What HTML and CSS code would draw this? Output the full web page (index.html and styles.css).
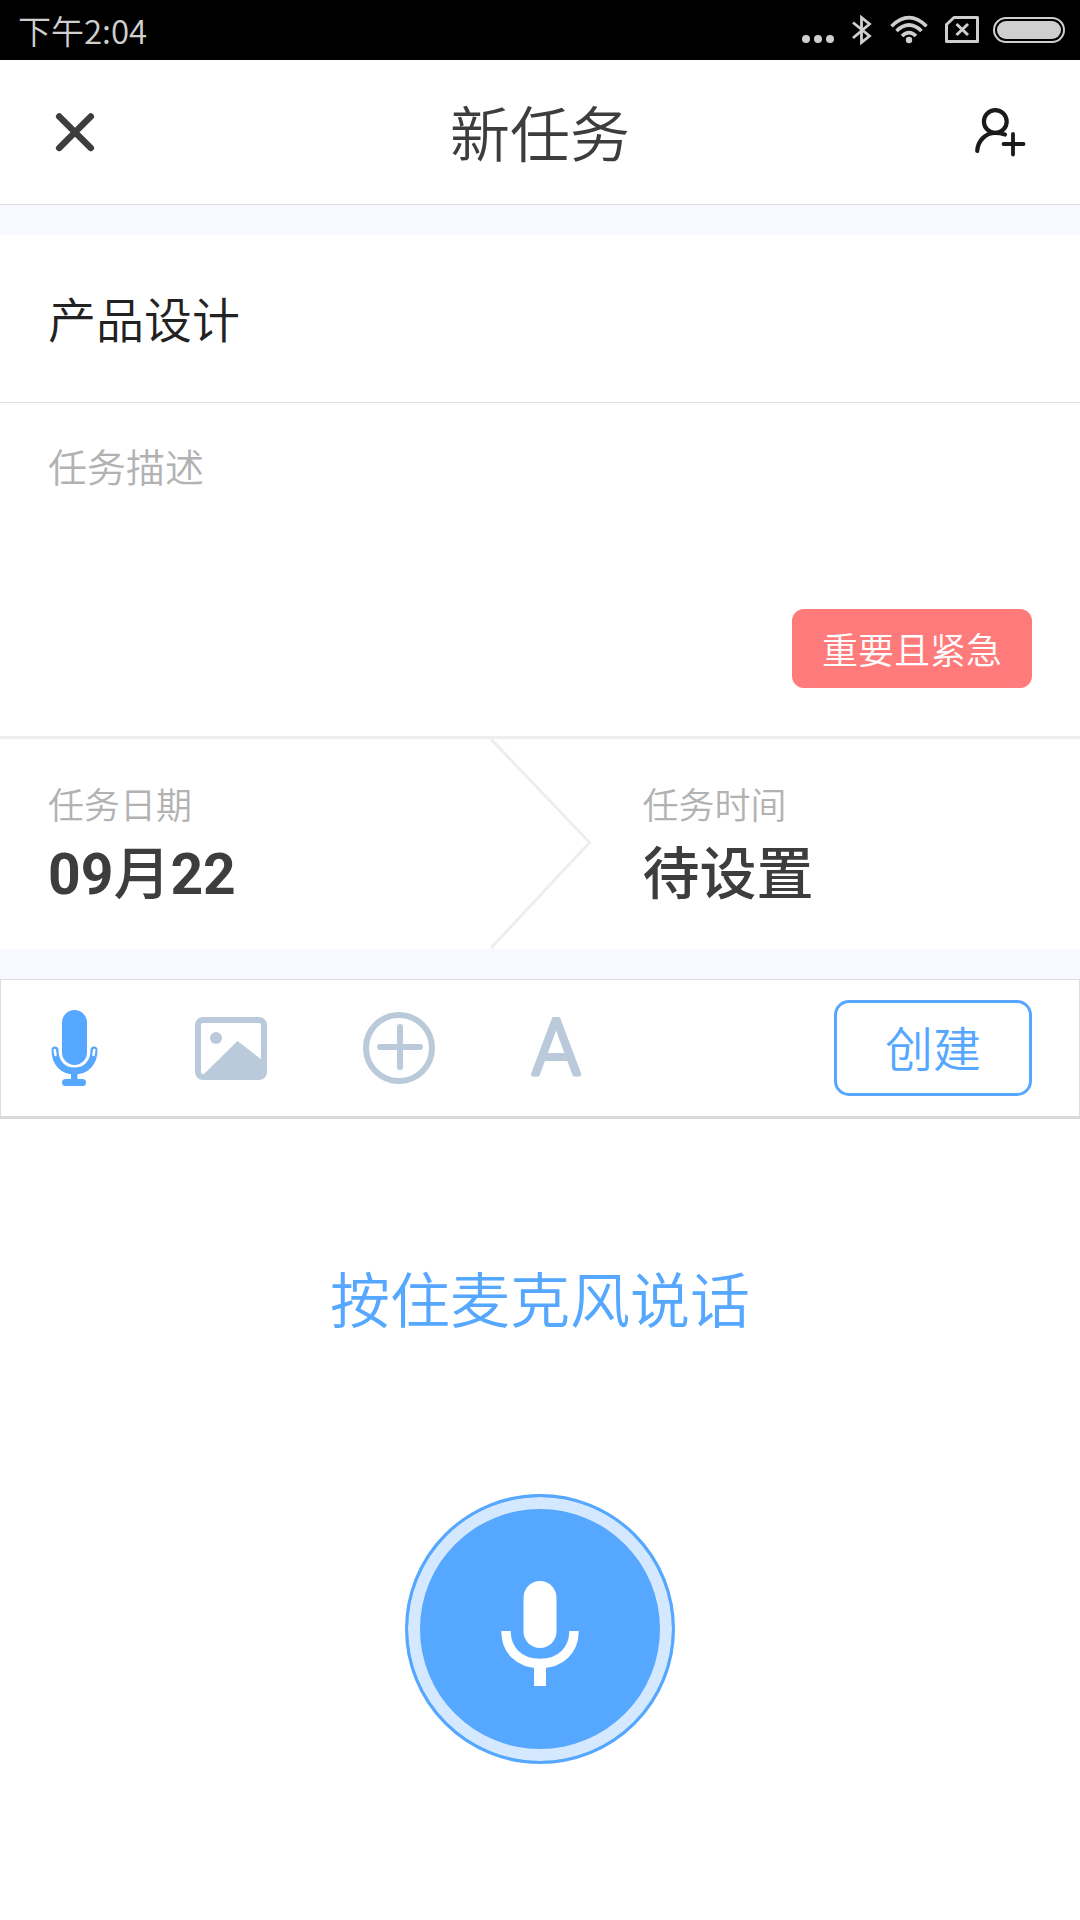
FILE: index.html
```
<!DOCTYPE html>
<html lang="zh-CN">
<head>
    <meta charset="UTF-8">
    <meta name="viewport" content="width=device-width, initial-scale=1.0">
    <title>新任务</title>
    <link rel="stylesheet" href="styles.css">
</head>
<body>
    <div class="status-bar">
        <span class="clock">下午2:04</span>
        <div class="status-icons">
            <svg width="34" height="30" viewBox="0 0 34 30" fill="#cfcfcf">
                <circle cx="4" cy="24" r="4"/>
                <circle cx="16" cy="24" r="4"/>
                <circle cx="28" cy="24" r="4"/>
            </svg>
            <svg class="bluetooth" width="20" height="30" viewBox="0 0 20 30" fill="none" stroke="#cfcfcf" stroke-width="2.800">
                <path d="M1 7.500L17.500 21L9.500 27.500V2.500L17.500 9L1 23"/>
            </svg>
            <svg class="wifi" width="38" height="30" viewBox="0 0 38 30" fill="none" stroke="#cfcfcf" stroke-width="3.600">
                <path d="M1.500 11.200Q19-5.800 36.500 11.200M6.500 16Q19 4 31.500 16M12 21Q19 14.200 26 21"/>
                <circle cx="19" cy="25" r="3.200" fill="#cfcfcf" stroke="none"/>
            </svg>
            <svg class="sim" width="34" height="30" viewBox="0 0 34 30" fill="none" stroke="#cfcfcf" stroke-width="3">
                <path d="M9 2.500H32.500V26.500H1.500V9.500Z" stroke-linejoin="round"/>
                <path d="M11.500 9L23 20M23 9L11.500 20"/>
            </svg>
            <svg class="battery" width="72" height="26" viewBox="0 0 72 26">
                <rect x="1" y="1" width="70" height="24" rx="12" fill="none" stroke="#cfcfcf" stroke-width="2"/>
                <rect x="4" y="4" width="64" height="18" rx="9" fill="#cfcfcf"/>
            </svg>
        </div>
    </div>

    <header class="header">
        <button class="icon-btn" type="button" aria-label="关闭">
            <svg width="58" height="52" viewBox="0 0 58 52" stroke="#3d3d3d" stroke-width="6.500" stroke-linecap="round">
                <path d="M11.200 10.500L42.800 42M42.800 10.500L11.200 42"/>
            </svg>
        </button>
        <h1>新任务</h1>
        <button class="icon-btn" type="button" aria-label="添加成员">
            <svg width="58" height="52" viewBox="0 0 58 52" fill="none" stroke="#1a1a1a" stroke-width="4.200" stroke-linecap="round">
                <circle cx="21.300" cy="15.500" r="11.400"/>
                <path d="M3.200 45C4 34 12 27 21 27Q26 27 31 28.500"/>
                <path d="M39 28V48.500M29.500 38H49.500" stroke-width="3.800"/>
            </svg>
        </button>
    </header>

    <main>
        <form class="task-form">
            <input class="task-title" type="text" aria-label="任务名称" value="产品设计">
            <div class="desc">
                <textarea class="task-desc" rows="3" aria-label="任务描述" placeholder="任务描述"></textarea>
                <button class="tag" type="button">重要且紧急</button>
            </div>
            <div class="schedule">
                <button class="schedule-item" type="button">
                    <span class="label">任务日期</span>
                    <span class="value"><b>09</b>月<b>22</b></span>
                </button>
                <svg class="chevron" width="102" height="210" viewBox="0 0 102 210" fill="none" stroke="#eee" stroke-width="3">
                    <path d="M1 0L99.500 103.500L1 209"/>
                </svg>
                <button class="schedule-item next" type="button">
                    <span class="label">任务时间</span>
                    <span class="value">待设置</span>
                </button>
            </div>
            <div class="toolbar">
                <button class="icon-btn" type="button" aria-label="语音">
                    <svg width="48" height="78" viewBox="0 0 48 78" fill="#56a7ff">
                        <rect x="11" y="1" width="25" height="55" rx="12.500"/>
                        <path d="M4 41C4 54 12 62 23.500 62C35 62 43 54 43 41" fill="none" stroke="#56a7ff" stroke-width="7" stroke-linecap="round"/>
                        <path d="M3.700 41L4.500 46M43.300 41L42.500 46" stroke="#fff" stroke-width="2.500" stroke-linecap="round"/>
                        <rect x="20" y="62" width="6.500" height="10"/>
                        <rect x="11" y="70" width="24" height="7" rx="3.500"/>
                    </svg>
                </button>
                <button class="icon-btn" type="button" aria-label="图片">
                    <svg width="72" height="63" viewBox="0 0 72 63">
                        <rect x="3" y="3" width="66" height="57" rx="5" fill="none" stroke="#bacada" stroke-width="6"/>
                        <circle cx="21" cy="21" r="6" fill="#bacada"/>
                        <path d="M8 58L42.500 24L67 43V60H8Z" fill="#bacada"/>
                    </svg>
                </button>
                <button class="icon-btn" type="button" aria-label="添加">
                    <svg width="72" height="72" viewBox="0 0 72 72" fill="none" stroke="#bacada" stroke-width="6" stroke-linecap="round">
                        <circle cx="36" cy="36" r="33"/>
                        <path d="M37 15V55M17 35H57"/>
                    </svg>
                </button>
                <button class="icon-btn" type="button" aria-label="文字">
                    <svg class="letter" width="52" height="96" viewBox="0 0 52 96">
                        <text x="25" y="75" text-anchor="middle">A</text>
                    </svg>
                </button>
                <button class="create-btn" type="submit">创建</button>
            </div>
        </form>

        <section class="voice">
            <p>按住麦克风说话</p>
            <button class="mic-btn" type="button" aria-label="麦克风">
                <svg width="80" height="106" viewBox="0 0 80 106" fill="#fff">
                    <rect x="23.500" y="0" width="33" height="67" rx="16.500"/>
                    <path d="M6 50C6 69 19 82.500 40 82.500C61 82.500 74 69 74 50" fill="none" stroke="#fff" stroke-width="9.500"/>
                    <rect x="34" y="82" width="12" height="23"/>
                </svg>
            </button>
        </section>
    </main>
</body>
</html>
```

FILE: styles.css
```
* {
    box-sizing: border-box;
}
body {
    margin: 0;
    background-color: #fff;
    color: #3d3d3d;
    font-family: "Noto Sans CJK SC", sans-serif;
    font-weight: 350;
}
button, input, textarea {
    font: inherit;
    color: inherit;
    margin: 0;
    padding: 0;
    border: none;
    background: none;
    outline: none;
}
button {
    cursor: pointer;
}
svg {
    display: block;
    flex: none;
}
.status-bar {
    display: flex;
    justify-content: space-between;
    align-items: center;
    height: 60px;
    padding: 0 15px 0 18px;
    background-color: #000;
    color: #cfcfcf;
}
.clock {
    font-size: 33px;
    line-height: 60px;
}
.status-icons {
    display: flex;
    align-items: center;
}
.bluetooth {
    margin-left: 16px;
}
.wifi {
    margin-left: 18px;
}
.sim {
    margin-left: 17px;
}
.battery {
    margin-left: 14px;
}
.header {
    display: flex;
    justify-content: space-between;
    align-items: center;
    height: 145px;
    padding: 0 48px;
    border-bottom: 1px solid #ddd;
}
.header h1 {
    margin: 0;
    padding-bottom: 2px;
    font-size: 60px;
    font-weight: inherit;
    line-height: 84px;
}
.task-form {
    border-top: 30px solid #f6faff;
}
.task-title {
    display: block;
    width: 100%;
    height: 168px;
    padding: 46px 48px 49px;
    border-bottom: 1px solid #ddd;
    color: #222;
    font-size: 48px;
    line-height: 72px;
}
.desc {
    display: flex;
    flex-direction: column;
    padding: 34px 48px 48px;
    border-bottom: 3px solid #eee;
}
.task-desc {
    width: 100%;
    margin-bottom: 4px;
    font-size: 39px;
    line-height: 56px;
    resize: none;
}
.task-desc::placeholder {
    color: #b2b2b2;
}
.tag {
    align-self: flex-end;
    padding: 12px 30px;
    border-radius: 12px;
    background-color: #ff7b7b;
    color: #fff;
    font-size: 36px;
    line-height: 55px;
}
.schedule {
    display: flex;
    border-bottom: 30px solid #f6faff;
}
.schedule-item {
    display: flex;
    flex: 1;
    flex-direction: column;
    justify-content: center;
    gap: 6px;
    padding: 3px 0 0 48px;
    text-align: left;
}
.schedule-item.next {
    padding-left: 51px;
}
.chevron {
    margin-left: 4px;
}
.label {
    color: #b2b2b2;
    font-size: 36px;
    line-height: 52px;
}
.value {
    font-family: Roboto, "Noto Sans CJK SC", sans-serif;
    font-size: 57px;
    font-weight: 500;
    line-height: 80px;
}
.value b {
    font-weight: bold;
}
.toolbar {
    display: flex;
    align-items: center;
    gap: 96px;
    padding: 20px 47px 20px 50px;
    border: 1px solid #ddd;
    border-bottom: 3px solid #d9d9d9;
}
.letter text {
    fill: #bacada;
    stroke: #bacada;
    stroke-width: 4;
    stroke-linejoin: round;
    font-family: Roboto, sans-serif;
    font-size: 78px;
    font-weight: 300;
}
.create-btn {
    padding: 7px 48px 11px;
    margin-left: auto;
    border: 3px solid #56a7ff;
    border-radius: 15px;
    color: #56a7ff;
    font-size: 48px;
    line-height: 72px;
}
.voice {
    display: flex;
    flex-direction: column;
    align-items: center;
    gap: 153px;
    padding: 134px 48px;
}
.voice p {
    margin: 0;
    color: #56a7ff;
    font-size: 60px;
    line-height: 88px;
}
.mic-btn {
    display: flex;
    justify-content: center;
    align-items: center;
    width: 270px;
    height: 270px;
    padding-top: 10px;
    border: 3px solid #56a7ff;
    border-radius: 50%;
    background-color: #56a7ff;
    box-shadow: inset 0 0 0 12px #d4e8ff;
}
```
